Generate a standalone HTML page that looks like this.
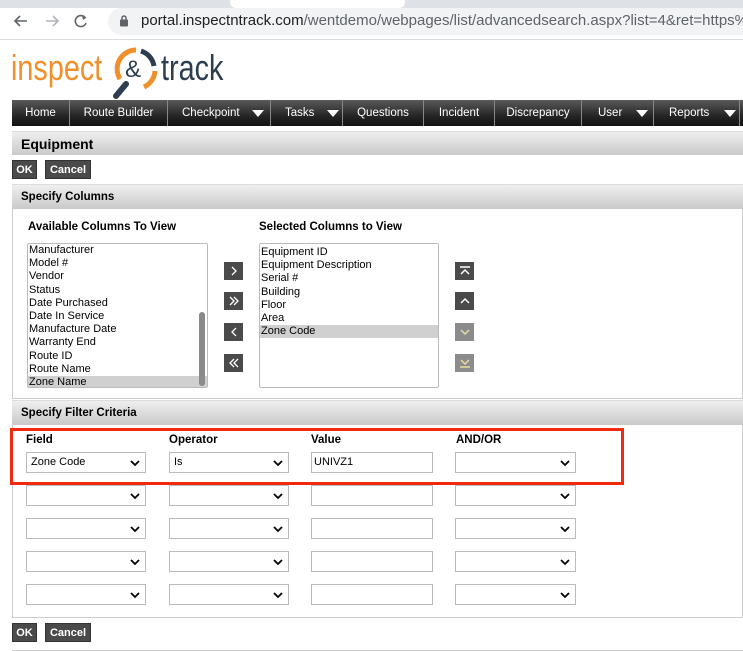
<!DOCTYPE html>
<html><head><meta charset="utf-8"><style>
*{margin:0;padding:0;box-sizing:border-box}
body{width:743px;height:651px;overflow:hidden;background:#fff;font-family:"Liberation Sans",sans-serif;font-size:11px;color:#000;position:relative}
.a{position:absolute}
.nav{top:100px;left:12px;width:731px;height:26px;background:linear-gradient(#5a5a5a,#262626 60%,#111)}
.ni{position:absolute;top:0;height:26px;line-height:26px;color:#fff;font-size:11.5px;border-right:1px solid #888;padding-left:0;text-align:center}
.tri{display:inline-block;width:0;height:0;border-left:6px solid transparent;border-right:6px solid transparent;border-top:7px solid #fff;position:absolute;top:10px}
.hdr{left:12px;width:731px;background:linear-gradient(#efefef,#c9c9c9);border-top:1px solid #ddd}
.hdr b{position:absolute;left:9px}
.btn{background:#4a4a4a;color:#fff;font-weight:bold;font-size:11px;height:19px;line-height:19px;text-align:center;border:1px solid #333}
.list{background:#fff;border:1px solid #bbb;border-radius:2px;font-size:11px;line-height:13.2px;padding-top:0}
.list div{padding-left:1px}
.sel{background:#d0d0d0}
.ab{width:19px;height:18px;background:#4a4a4a;color:#fff;text-align:center;line-height:17px;font-size:16px}
.ab.l{background:#8c8c8c;color:#e8dca0}
.ab svg{margin-top:3px}
.dd{height:21px;border:1px solid #bbb;background:#fff;font-size:11px;line-height:19px;padding-left:4px}
.dd svg{position:absolute;right:5px;top:6px}
.lbl{font-weight:bold;font-size:11.5px}
</style></head><body>
<div class="a" style="left:0;top:0;width:743px;height:8px;background:#dee1e6"></div>
<div class="a" style="left:230px;top:0;width:175px;height:8px;background:#fff;border-radius:0 0 6px 6px"></div>
<div class="a" style="left:0;top:39px;width:743px;height:1px;background:#dadce0"></div>
<svg class="a" style="left:12px;top:13px" width="80" height="16" viewBox="0 0 80 16"><path d="M15 8H3M8 3L3 8l5 5" stroke="#5f6368" stroke-width="1.6" fill="none"/><path d="M34 8h12M41 3l5 5-5 5" stroke="#b0b3b8" stroke-width="1.6" fill="none"/><path d="M73 4.5A5.5 5.5 0 1 0 74 10" stroke="#5f6368" stroke-width="1.6" fill="none"/><path d="M70 2l4.5 2.5L71 7" fill="#5f6368"/></svg>
<div class="a" style="left:108px;top:8px;width:660px;height:27px;background:#f1f3f4;border-radius:14px"></div>
<svg class="a" style="left:119px;top:14px" width="10" height="13"><rect x="1" y="5.5" width="8" height="7" rx="1" fill="#5f6368"/><path d="M3 6V4a2 2 0 0 1 4 0v2" stroke="#5f6368" stroke-width="1.5" fill="none"/></svg>
<div class="a" style="left:141px;top:11px;font-size:15px;line-height:20px;color:#202124;white-space:nowrap">portal.inspectntrack.com<span style="color:#5f6368">/wentdemo/webpages/list/advancedsearch.aspx?list=4&amp;ret=https%</span></div>
<div class="a" style="left:11px;top:48px;font-size:36px;color:#f0902a;line-height:40px;transform:scaleX(0.8);transform-origin:left">inspect</div>
<svg class="a" style="left:108px;top:44px" width="56" height="56" viewBox="0 0 56 56"><path d="M28 6A19 19 0 0 0 12 35" stroke="#f0902a" stroke-width="5" fill="none"/><path d="M33 7A19 19 0 0 1 46 22" stroke="#2d3e50" stroke-width="5" fill="none"/><path d="M47 27A19 19 0 0 1 36 43" stroke="#f0902a" stroke-width="5" fill="none"/><path d="M18 40L8 52" stroke="#2d3e50" stroke-width="6" stroke-linecap="round"/><text x="17" y="33" font-size="24" fill="#2d3e50" font-family="Liberation Sans">&amp;</text></svg>
<div class="a" style="left:161px;top:48px;font-size:36px;color:#2d3e50;line-height:40px;transform:scaleX(0.8);transform-origin:left">track</div>
<div class="a nav">
<div class="ni" style="left:0;width:58px">Home</div>
<div class="ni" style="left:58px;width:98px">Route Builder</div>
<div class="ni" style="left:156px;width:103px;text-align:left;padding-left:14px">Checkpoint<span class="tri" style="left:84px"></span></div>
<div class="ni" style="left:259px;width:72px;text-align:left;padding-left:14px">Tasks<span class="tri" style="left:56px"></span></div>
<div class="ni" style="left:331px;width:81px">Questions</div>
<div class="ni" style="left:412px;width:71px">Incident</div>
<div class="ni" style="left:483px;width:87px">Discrepancy</div>
<div class="ni" style="left:570px;width:72px;text-align:left;padding-left:16px">User<span class="tri" style="left:54px"></span></div>
<div class="ni" style="left:642px;width:86px;text-align:left;padding-left:15px">Reports<span class="tri" style="left:70px"></span></div>
</div>
<div class="a hdr" style="top:131px;height:24px"><b style="top:4px;font-size:14px">Equipment</b></div>
<div class="a btn" style="left:12px;top:160px;width:25px">OK</div>
<div class="a btn" style="left:45px;top:160px;width:46px">Cancel</div>
<div class="a" style="left:12px;top:184px;width:731px;height:215px;border:1px solid #ccc"></div>
<div class="a hdr" style="top:184px;height:25px"><b style="top:6px;font-size:11.5px">Specify Columns</b></div>
<div class="a lbl" style="left:28px;top:221px">Available Columns To View</div>
<div class="a lbl" style="left:259px;top:221px">Selected Columns to View</div>
<div class="a list" style="left:27px;top:243px;width:181px;height:145px;overflow:hidden">
<div>Manufacturer</div><div>Model #</div><div>Vendor</div><div>Status</div><div>Date Purchased</div><div>Date In Service</div><div>Manufacture Date</div><div>Warranty End</div><div>Route ID</div><div>Route Name</div><div class="sel">Zone Name</div>
<div class="a" style="left:171px;top:68px;width:6px;height:74px;background:#8a8a8a;border-radius:3px"></div>
</div>
<div class="a list" style="left:259px;top:243px;width:180px;height:145px">
<div style="margin-top:2px">Equipment ID</div><div>Equipment Description</div><div>Serial #</div><div>Building</div><div>Floor</div><div>Area</div><div class="sel">Zone Code</div>
</div>
<div class="a ab" style="left:224px;top:262px"><svg width="12" height="12" viewBox="0 0 12 12"><path d="M4 2l4 4-4 4" stroke="#fff" stroke-width="1.3" fill="none"/></svg></div>
<div class="a ab" style="left:224px;top:292px"><svg width="12" height="12" viewBox="0 0 12 12"><path d="M2 2l4 4-4 4M6 2l4 4-4 4" stroke="#fff" stroke-width="1.3" fill="none"/></svg></div>
<div class="a ab" style="left:224px;top:323px"><svg width="12" height="12" viewBox="0 0 12 12"><path d="M8 2L4 6l4 4" stroke="#fff" stroke-width="1.3" fill="none"/></svg></div>
<div class="a ab" style="left:224px;top:354px"><svg width="12" height="12" viewBox="0 0 12 12"><path d="M6 2L2 6l4 4M10 2L6 6l4 4" stroke="#fff" stroke-width="1.3" fill="none"/></svg></div>
<div class="a ab" style="left:455px;top:262px"><svg width="12" height="12" viewBox="0 0 12 12"><path d="M1 2h10M2 9l4-4 4 4" stroke="#fff" stroke-width="1.5" fill="none"/></svg></div>
<div class="a ab" style="left:455px;top:292px"><svg width="12" height="12" viewBox="0 0 12 12"><path d="M2 8l4-4 4 4" stroke="#fff" stroke-width="1.5" fill="none"/></svg></div>
<div class="a ab l" style="left:455px;top:323px"><svg width="12" height="12" viewBox="0 0 12 12"><path d="M2 4l4 4 4-4" stroke="#e8dca0" stroke-width="1.5" fill="none"/></svg></div>
<div class="a ab l" style="left:455px;top:354px"><svg width="12" height="12" viewBox="0 0 12 12"><path d="M2 3l4 4 4-4M1 10h10" stroke="#e8dca0" stroke-width="1.5" fill="none"/></svg></div>
<div class="a" style="left:12px;top:400px;width:731px;height:218px;border:1px solid #ccc"></div>
<div class="a hdr" style="top:400px;height:25px"><b style="top:6px;font-size:11.5px">Specify Filter Criteria</b></div>
<div class="a" style="left:10px;top:428px;width:614px;height:57px;border:3px solid #f02a0c"></div>
<div class="a lbl" style="left:26px;top:434px">Field</div>
<div class="a lbl" style="left:169px;top:434px">Operator</div>
<div class="a lbl" style="left:311px;top:434px">Value</div>
<div class="a lbl" style="left:456px;top:434px">AND/OR</div>
<div id="rows"></div>
<script>
var ys=[452,485,518,551,584],h='';
var ch='<svg width="10" height="8" viewBox="0 0 10 8"><path d="M1 2l4 4 4-4" stroke="#000" stroke-width="1.8" fill="none"/></svg>';
ys.forEach(function(y,i){
h+='<div class="a dd" style="left:26px;top:'+y+'px;width:120px">'+(i?'':'Zone Code')+ch+'</div>';
h+='<div class="a dd" style="left:169px;top:'+y+'px;width:120px">'+(i?'':'Is')+ch+'</div>';
h+='<div class="a dd" style="left:311px;top:'+y+'px;width:122px;padding-left:2px">'+(i?'':'UNIVZ1')+'</div>';
h+='<div class="a dd" style="left:455px;top:'+y+'px;width:121px">'+ch+'</div>';
});
document.getElementById('rows').innerHTML=h;
</script>
<div class="a btn" style="left:12px;top:623px;width:25px">OK</div>
<div class="a btn" style="left:45px;top:623px;width:46px">Cancel</div>
<div class="a" style="left:12px;top:650px;width:731px;height:1px;background:#ccc"></div>
</body></html>
